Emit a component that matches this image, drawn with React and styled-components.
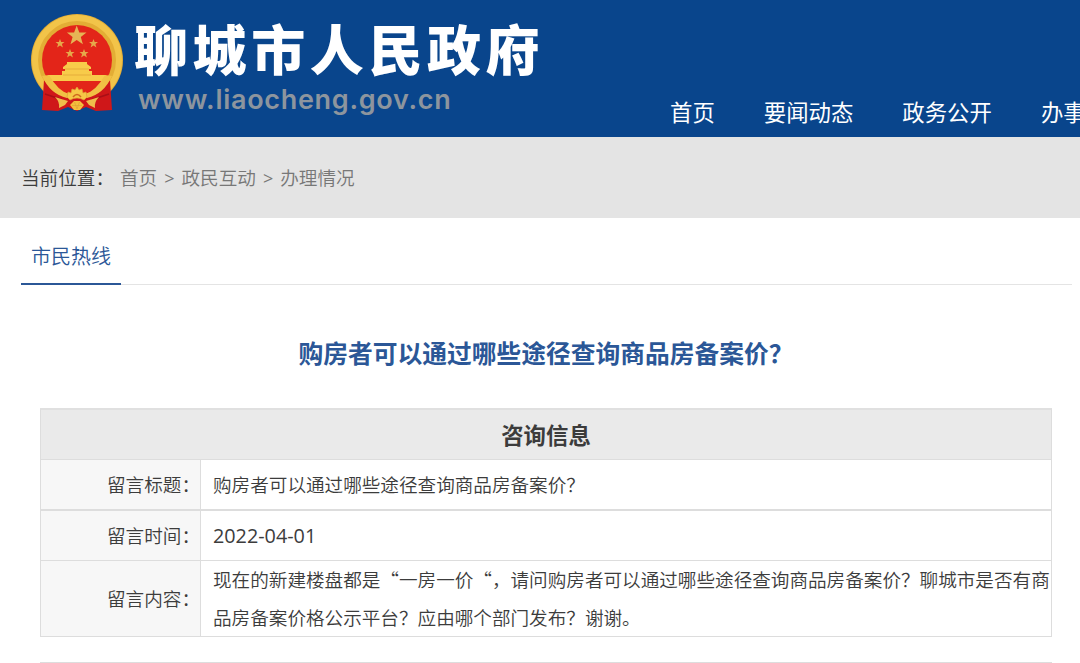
import styled, { createGlobalStyle } from 'styled-components'

const color = {
  navy: '#09458c',
  blue: '#2b5797',
  text: '#3c3c3c',
  muted: '#777777',
  line: '#dddddd',
}

const navItems = ['首页', '要闻动态', '政务公开', '办事服务']
const crumbs = ['首页', '政民互动', '办理情况']

const rows = [
  { label: '留言标题：', value: '购房者可以通过哪些途径查询商品房备案价？' },
  { label: '留言时间：', value: '2022-04-01', latin: true },
  {
    label: '留言内容：',
    value:
      '现在的新建楼盘都是“一房一价“，请问购房者可以通过哪些途径查询商品房备案价？聊城市是否有商品房备案价格公示平台？应由哪个部门发布？谢谢。',
  },
]

const smallStars = [
  [30, 29.5],
  [63.5, 29.5],
  [40, 39.5],
  [54, 39.5],
]

const Emblem = () => (
  <EmblemSvg viewBox="0 0 94 98">
    <circle cx="47" cy="46" r="46" fill="#e3ad35" />
    <circle cx="47" cy="46" r="42" fill="none" stroke="#f2c449" strokeWidth="6" />
    <circle cx="47" cy="46" r="35" fill="#e32519" />
    <path d="M46.700 11.500l2.600 7h7.200l-5.700 4.500 2.100 7.200-6.200-4.200-6.200 4.200 2.100-7.200-5.700-4.500h7.200z" fill="#e6b455" />
    {smallStars.map(([x, y]) => (
      <path
        key={`${x}-${y}`}
        transform={`translate(${x} ${y})`}
        d="M0-4.500l1.200 3h3.300l-2.600 2 1 3.400L0 2l-2.900 1.900 1-3.400-2.600-2h3.300z"
        fill="#e6a84a"
      />
    ))}
    <path d="M37 48h20v2l4 3v2h-2v2h3v4h14l1 6H17l1-6h14v-4h3v-2h-2v-2l4-3z" fill="#f8cb4a" />
    <path d="M35 55h24M33 61h28" stroke="#e0a233" strokeWidth="0.7" />
    <path
      d="M14 66l-2 30 16 1 10-4 9 4 9-4 10 4 16-1-2-30-7 7-10 8-16 3-16-3-10-8z"
      fill="#cf1719"
    />
    <path d="M12 62l7-1q9 16 20 19l8 1 8-1q11-3 20-19l7 1q-8 18-25 22H37Q20 80 12 62z" fill="#f1c044" />
    <path d="M15 80l12 4 6 2M79 80l-12 4-6 2" stroke="#a80f16" strokeWidth="1.500" fill="none" />
    <path d="M25 83q6 2 13 4l-3 4-6 3q1-6-4-11zM69 83q-6 2-13 4l3 4 6 3q-1-6 4-11z" fill="#efbd4b" />
    <path
      d="M37 83l1-5 3 1 1-4 3 1 2-3 2 3 3-1 1 4 3-1 1 5-3 3q-7-4-14 0z"
      fill="#f6c746"
      stroke="#e0a233"
      strokeWidth="0.7"
    />
    <path d="M43 83q4-5 8 0" fill="none" stroke="#d0691f" strokeWidth="1.500" />
    <path d="M40 91l4-4h6l4 4-4 5h-6z" fill="#f4bf3d" />
    <path d="M42 91.500h10M44.500 88l2.500 7 2.500-7" fill="none" stroke="#e0a233" strokeWidth="0.7" />
  </EmblemSvg>
)

const Header = () => (
  <HeaderBar>
    <Brand>
      <Emblem />
      <BrandText>
        <h1>聊城市人民政府</h1>
        <p>www.liaocheng.gov.cn</p>
      </BrandText>
    </Brand>
    <Nav>
      {navItems.map((item) => (
        <a key={item}>{item}</a>
      ))}
    </Nav>
  </HeaderBar>
)

const App = () => (
  <>
    <GlobalStyle />
    <Header />

    <Breadcrumb>
      <strong>当前位置：</strong>
      {crumbs.map((crumb, i) => (
        <span key={crumb}>
          {i > 0 && <i>&gt;</i>}
          {crumb}
        </span>
      ))}
    </Breadcrumb>

    <Tabs>
      <Tab>市民热线</Tab>
    </Tabs>

    <Main>
      <Title>购房者可以通过哪些途径查询商品房备案价？</Title>
      <Table>
        <TableHead>咨询信息</TableHead>
        {rows.map(({ label, value, latin }) => (
          <Row key={label}>
            <Label>{label}</Label>
            <Value $latin={latin}>{value}</Value>
          </Row>
        ))}
      </Table>
      <NextTable />
    </Main>
  </>
)

const GlobalStyle = createGlobalStyle`
  * {
    box-sizing: border-box;
  }

  body {
    margin: 0;
    height: 663px;
    overflow: hidden;
    background: #fff;
    color: ${color.text};
    font-family: 'Noto Sans CJK SC', sans-serif;
    font-size: 18.6px;
    font-weight: 350;
  }

  h1, h2, p {
    margin: 0;
  }
`

const HeaderBar = styled.header`
  display: flex;
  height: 137px;
  overflow: hidden;
  background: ${color.navy};
`

const Brand = styled.div`
  display: flex;
  flex: none;
  width: 670px;
  padding: 14px 0 0 30px;
`

const EmblemSvg = styled.svg`
  flex: none;
  width: 94px;
  height: 98px;
`

const BrandText = styled.div`
  padding-left: 10px;
  white-space: nowrap;

  h1 {
    margin-top: 3px;
    color: #fff;
    font-size: 54px;
    font-weight: 900;
    line-height: 62px;
    letter-spacing: 4.6px;
  }

  p {
    margin: 6px 0 0 4px;
    color: #8d959e;
    font-family: Inter, sans-serif;
    font-size: 27px;
    font-weight: 600;
    line-height: 30px;
    letter-spacing: 0.7px;
  }
`

const Nav = styled.nav`
  display: flex;
  gap: 49px;
  padding-top: 95px;
  color: #fff;
  font-size: 22.4px;
  font-weight: 400;
  line-height: 32px;
  white-space: nowrap;
`

const Breadcrumb = styled.div`
  display: flex;
  height: 81px;
  padding-left: 21px;
  background: #e4e4e4;
  color: ${color.muted};
  line-height: 79px;

  strong {
    width: 99px;
    color: ${color.text};
    font-weight: inherit;
  }

  i {
    padding: 0 7px;
    font-family: 'Open Sans', sans-serif;
    font-size: 18px;
    font-style: normal;
    font-weight: 400;
  }
`

const Tabs = styled.div`
  display: flex;
  height: 67px;
  margin: 0 8px 0 21px;
  border-bottom: 1px solid #e4e4e4;
`

const Tab = styled.div`
  width: 100px;
  height: 67px;
  border-bottom: 2px solid ${color.blue};
  color: ${color.blue};
  font-size: 20px;
  line-height: 75px;
  text-align: center;
`

const Main = styled.main`
  width: 1012px;
  margin-left: 40px;
`

const Title = styled.h2`
  height: 123px;
  color: ${color.blue};
  font-size: 24.75px;
  line-height: 134px;
  text-align: center;
`

const Table = styled.section`
  border: 1px solid ${color.line};
  border-top: 2px solid #e0e0e0;
`

const TableHead = styled.div`
  height: 49px;
  background: #eaeaea;
  font-size: 22.4px;
  font-weight: 700;
  line-height: 49px;
  text-align: center;
`

const Row = styled.div`
  display: flex;
  height: 50px;
  border-top: 1px solid ${color.line};

  &:nth-child(3) {
    height: 51px;
    border-top-width: 2px;
  }

  &:last-child {
    height: 76px;
  }
`

const Label = styled.div`
  display: flex;
  align-items: center;
  justify-content: flex-end;
  width: 160px;
  flex: none;
  padding-bottom: 2px;
  border-right: 1px solid ${color.line};
  background: #f7f7f7;
`

const Value = styled.div`
  display: flex;
  align-items: center;
  flex: 1;
  padding-bottom: ${(props) => (props.$latin ? 0 : '2px')};
  padding-left: 12px;
  font-family: ${(props) => (props.$latin ? "'Open Sans', sans-serif" : 'inherit')};
  font-size: ${(props) => (props.$latin ? '19.8px' : 'inherit')};
  font-weight: ${(props) => (props.$latin ? 400 : 'inherit')};
  line-height: 37.500px;
`

const NextTable = styled.div`
  margin-top: 25px;
  border-top: 2px solid ${color.line};
`

export default App
